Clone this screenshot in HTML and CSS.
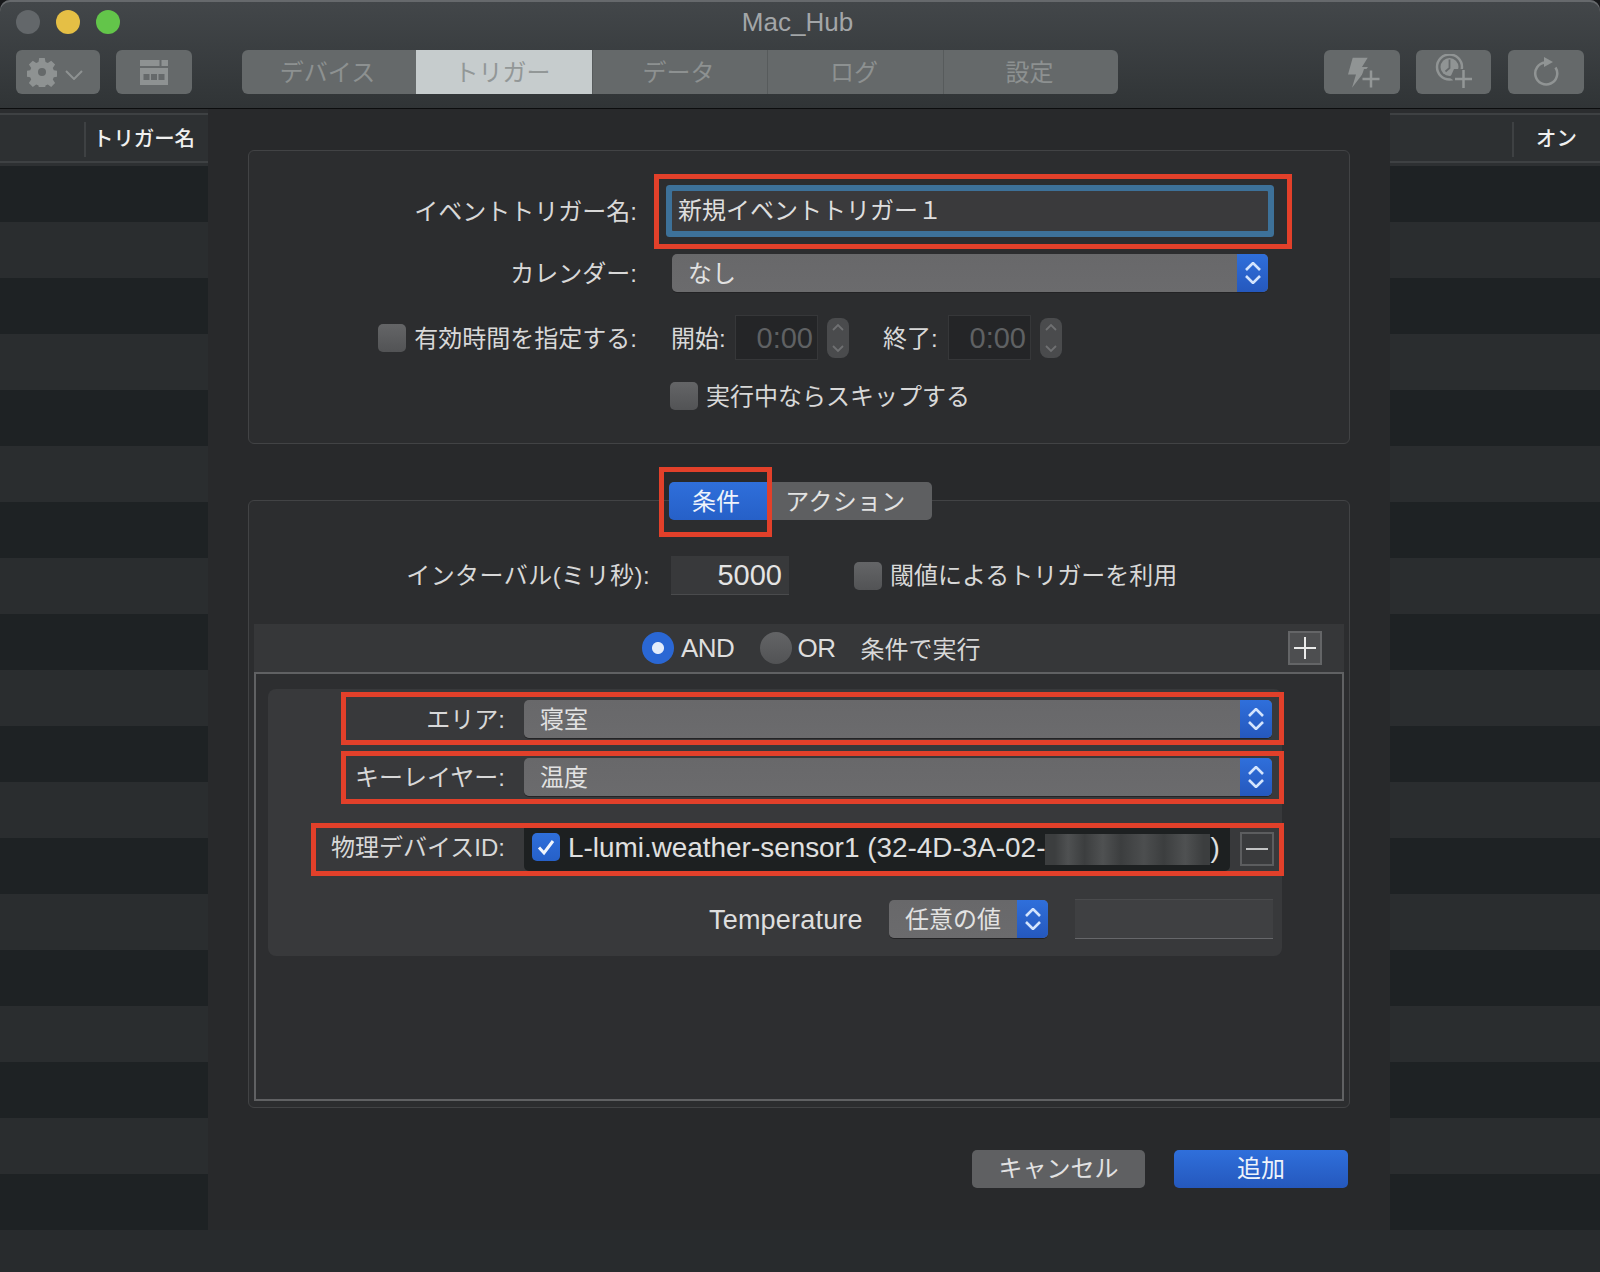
FILE: index.html
```html
<!DOCTYPE html>
<html lang="ja">
<head>
<meta charset="utf-8">
<title>Mac_Hub</title>
<link rel="stylesheet" href="styles.css">
</head>
<body>
<div class="window">
  <header class="titlebar">
    <div class="title-row">
      <div class="lights"><span class="light light-close"></span><span class="light light-min"></span><span class="light light-max"></span></div>
      <div class="app-title">Mac_Hub</div>
      <div></div>
    </div>
    <div class="toolbar">
      <div class="tool tool-gear">
        <svg class="ico-gear" width="30" height="30" viewBox="0 0 30 30"><path fill-rule="evenodd" d="M12.200 1h5.600l.7 4 2.300 1 3.400-2.300 3.900 3.900-2.300 3.400 1 2.300 4 .7v5.600l-4 .7-1 2.300 2.300 3.400-3.900 3.900-3.400-2.300-2.300 1-.7 4h-5.600l-.7-4-2.300-1-3.400 2.300-3.900-3.900 2.300-3.400-1-2.300-4-.7v-5.600l4-.7 1-2.300-2.300-3.400 3.900-3.900 3.400 2.300 2.300-1zM15 11a4 4 0 1 0 0 8 4 4 0 0 0 0-8z"/></svg>
        <svg class="ico-down" width="18" height="10" viewBox="0 0 18 10"><path d="M1 1l8 8 8-8"/></svg>
      </div>
      <div class="tool tool-table">
        <svg width="28" height="25" viewBox="0 0 28 25"><path fill-rule="evenodd" d="M0 0h19.500v6H0zM21.500 0H28v6h-6.500zM0 8h28v17H0zM3.500 14v6h6v-6zM11 14v6h6v-6zM18.500 14v6h6v-6z"/></svg>
      </div>
      <nav class="segments">
        <div class="seg seg-a">デバイス</div>
        <div class="seg seg-b seg-on">トリガー</div>
        <div class="seg seg-c">データ</div>
        <div class="seg seg-b">ログ</div>
        <div class="seg seg-c">設定</div>
      </nav>
      <div class="tool-group">
        <div class="tool tool-act">
          <svg width="50" height="36" viewBox="0 0 50 36"><path class="solid" d="M15.700 3.700H30.700L25 13H31L15 33.700L19 20.500H11Z"/><path class="cut" d="M27 15h15v18H21z"/><path class="line" d="M34 16.500v17M25.500 25h17"/></svg>
        </div>
        <div class="tool tool-clock">
          <svg width="44" height="36" viewBox="0 0 44 36"><circle class="ring" cx="17.500" cy="13" r="12.500"/><circle class="solid" cx="17.500" cy="13" r="9"/><path class="hand" d="M17.500 5.500v8.500l-4 3.500"/><path class="cut" d="M22 15h14v14H21v-3l-3-2z"/><path class="line" d="M31.500 16v18M23 25h17"/></svg>
        </div>
        <div class="tool tool-refresh">
          <svg width="26" height="32" viewBox="0 0 26 32"><path class="ring" d="M12 6.500A11 11 0 1 0 22.500 11.500"/><path class="solid" d="M11 1l9 5-9 5z"/></svg>
        </div>
      </div>
    </div>
  </header>

  <div class="content">
    <aside class="list">
      <div class="list-head">
        <span class="head-spacer-left"></span><span class="head-rule"></span><span class="head-text head-text-left">トリガー名</span>
      </div>
      <div class="rows"></div>
    </aside>

    <main class="sheet">
      <section class="group group-top">
        <div class="row row-name">
          <div class="label label-top">イベントトリガー名:</div>
          <div class="focus-field">新規イベントトリガー１</div>
          <div class="mark mark-name"></div>
        </div>
        <div class="row row-cal">
          <div class="label label-top">カレンダー:</div>
          <div class="popup popup-cal"><span>なし</span><span class="popup-arrows"><svg width="16" height="22" viewBox="0 0 16 22"><path d="M1 8l7-7 7 7M1 14l7 7 7-7"/></svg></span></div>
        </div>
        <div class="row row-time">
          <div class="label label-top label-check"><span class="check"></span><span class="check-text">有効時間を指定する:</span></div>
          <span class="time-label time-start">開始:</span>
          <div class="time-field">0:00</div>
          <div class="stepper"><svg width="12" height="30" viewBox="0 0 12 30"><path d="M1 7l5-5 5 5M1 23l5 5 5-5"/></svg></div>
          <span class="time-label time-end">終了:</span>
          <div class="time-field">0:00</div>
          <div class="stepper"><svg width="12" height="30" viewBox="0 0 12 30"><path d="M1 7l5-5 5 5M1 23l5 5 5-5"/></svg></div>
        </div>
        <div class="row row-skip"><span class="check"></span><span class="option-text">実行中ならスキップする</span></div>
      </section>

      <div class="tabs">
        <div class="tab tab-on">条件</div>
        <div class="tab tab-off">アクション</div>
        <div class="mark mark-tab"></div>
      </div>

      <section class="group group-cond">
        <div class="row row-interval">
          <div class="label label-interval">インターバル(ミリ秒):</div>
          <div class="num-field">5000</div>
          <span class="check check-threshold"></span><span class="option-text">閾値によるトリガーを利用</span>
        </div>
        <div class="panel">
          <div class="panel-bar">
            <span class="radio radio-on"></span><span class="radio-text">AND</span>
            <span class="radio radio-off"></span><span class="radio-text">OR</span>
            <span class="panel-note">条件で実行</span>
            <span class="square-btn square-plus"><svg width="24" height="24" viewBox="0 0 24 24"><path d="M12 1v22M1 12h22"/></svg></span>
          </div>
          <div class="panel-body">
            <div class="card">
              <div class="card-row card-row-area">
                <div class="label label-card">エリア:</div>
                <div class="popup popup-wide"><span>寝室</span><span class="popup-arrows popup-arrows-wide"><svg width="16" height="22" viewBox="0 0 16 22"><path d="M1 8l7-7 7 7M1 14l7 7 7-7"/></svg></span></div>
                <div class="mark mark-area"></div>
              </div>
              <div class="card-row card-row-key">
                <div class="label label-card">キーレイヤー:</div>
                <div class="popup popup-wide"><span>温度</span><span class="popup-arrows popup-arrows-wide"><svg width="16" height="22" viewBox="0 0 16 22"><path d="M1 8l7-7 7 7M1 14l7 7 7-7"/></svg></span></div>
                <div class="mark mark-key"></div>
              </div>
              <div class="card-row card-row-device">
                <div class="label label-card">物理デバイスID:</div>
                <div class="device">
                  <span class="check check-on"><svg width="20" height="18" viewBox="0 0 20 18"><path d="M3 9.500l5 5.500L17 3"/></svg></span>
                  <span class="device-text device-name">L-lumi.weather-sensor1 (32-4D-3A-02-</span><span class="redacted"></span><span class="device-text">)</span>
                </div>
                <span class="square-btn square-minus"><svg width="24" height="4" viewBox="0 0 24 4"><path d="M1 2h22"/></svg></span>
                <div class="mark mark-device"></div>
              </div>
              <div class="card-row card-row-temp">
                <span class="temp-label">Temperature</span>
                <div class="popup popup-small"><span>任意の値</span><span class="popup-arrows"><svg width="16" height="22" viewBox="0 0 16 22"><path d="M1 8l7-7 7 7M1 14l7 7 7-7"/></svg></span></div>
                <div class="temp-field"></div>
              </div>
            </div>
          </div>
        </div>
      </section>

      <footer class="actions">
        <div class="btn btn-cancel">キャンセル</div>
        <div class="btn btn-add">追加</div>
      </footer>
    </main>

    <aside class="list list-right">
      <div class="list-head">
        <span class="head-spacer-right"></span><span class="head-rule"></span><span class="head-text head-text-right">オン</span>
      </div>
      <div class="rows"></div>
    </aside>
  </div>
  <div class="statusbar"></div>
</div>
</body>
</html>
```

FILE: styles.css
```css
* { box-sizing: border-box; }
html, body { margin: 0; padding: 0; }
body {
  width: 1600px;
  height: 1272px;
  overflow: hidden;
  background: #17181a;
  color: #d8d8d8;
  font-family: "Liberation Sans", "Noto Sans CJK JP", sans-serif;
  font-size: 24px;
}
.window { display: flex; flex-direction: column; height: 1272px; }

/* title bar */
.titlebar {
  height: 109px;
  flex: none;
  border-bottom: 1px solid #0c0d0e;
  background: linear-gradient(#43474a, #303436);
  box-shadow: inset 0 2px 0 #66696c;
  border-radius: 10px 10px 0 0;
}
.title-row {
  height: 44px;
  padding: 0 16px;
  display: grid;
  grid-template-columns: 1fr auto 1fr;
  align-items: center;
}
.lights { display: flex; gap: 16px; }
.light { width: 24px; height: 24px; border-radius: 50%; }
.light-close { background: #63676a; }
.light-min { background: #e5bf45; }
.light-max { background: #63c54a; }
.app-title { color: #a3a6a8; font-size: 26px; padding-right: 5px; }
.toolbar { margin-top: 6px; height: 44px; padding: 0 16px; display: flex; }
.tool {
  height: 44px;
  width: 76px;
  background: #65696a;
  border-radius: 6px;
  display: flex;
  align-items: center;
  justify-content: center;
}
.tool svg { display: block; fill: #8e9292; }
.tool .solid { fill: #909494; }
.tool .line { fill: none; stroke: #939797; stroke-width: 2.500; }
.tool .ring { fill: none; stroke: #909494; stroke-width: 2.500; }
.tool .hand { fill: none; stroke: #65696a; stroke-width: 1.800; }
.tool .cut { fill: #65696a; }
.tool-gear { width: 84px; justify-content: flex-start; padding-left: 11px; }
.tool-gear .ico-down { fill: none; stroke: #8e9292; stroke-width: 2; margin: 6px 0 0 8px; }
.tool-table { margin-left: 16px; }
.segments {
  margin-left: 50px;
  display: flex;
  border-radius: 6px;
  overflow: hidden;
  background: #65696a;
}
.seg {
  height: 44px;
  display: flex;
  align-items: center;
  justify-content: center;
  color: #8d9191;
  font-size: 24px;
  padding: 0 3px 4px 0;
  border-left: 1px solid #575b5c;
}
.seg-a { width: 174px; border-left: 0; }
.seg-b { width: 176px; }
.seg-c { width: 175px; }
.seg-on { background: #c6cccd; color: #929797; border-left: 0; }
.tool-group { margin-left: auto; display: flex; gap: 16px; }
.tool-clock { width: 75px; }
.tool-refresh { margin-left: 1px; }

/* main content */
.content { flex: 1; display: flex; min-height: 0; }
.list { width: 208px; flex: none; display: flex; flex-direction: column; }
.list-right { width: 210px; }
.list-head {
  height: 57px;
  flex: none;
  padding-top: 4px;
  display: flex;
  align-items: center;
  background: linear-gradient(#2b2d2f 0 4px, #3e4143 4px 6px, #2d3032 6px 52px, #3e4143 52px 54px, #2d3032 54px);
}
.head-spacer-left { width: 84px; flex: none; }
.head-spacer-right { width: 122px; flex: none; }
.head-rule { width: 2px; height: 35px; background: #3e4143; flex: none; }
.head-text { color: #f0f0f0; font-size: 20.400px; font-weight: 500; margin-top: -6px; white-space: nowrap; }
.head-text-left { margin-left: 7px; }
.head-text-right { margin-left: 22px; }
.rows {
  flex: 1;
  background: repeating-linear-gradient(#1e2224 0 56px, #2a2d2f 56px 112px);
}
.statusbar { height: 42px; flex: none; background: #282b2d; }

.sheet {
  width: 1182px;
  flex: none;
  padding: 41px 40px 0 40px;
  background: #28292b;
}
.group {
  background: #2c2d2f;
  border: 1px solid #424345;
  border-radius: 6px;
}
.group-top { height: 294px; padding-top: 40px; }
.row { display: flex; align-items: center; position: relative; }
.label { flex: none; text-align: right; white-space: nowrap; color: #d8d8d8; padding-bottom: 4px; }
.label-top { width: 388px; }
.row-name { height: 40px; }
.focus-field {
  margin-left: 35px;
  width: 596px;
  height: 40px;
  line-height: 40px;
  padding-left: 6px;
  background: #3a3a3c;
  color: #dedede;
  box-shadow: 0 0 0 6px #3d7199;
  border-radius: 1px;
}
.mark {
  position: absolute;
  border: 5px solid #e2402a;
  pointer-events: none;
  z-index: 3;
}
.mark-name { left: 405px; top: -17px; width: 638px; height: 75px; }
.row-cal { margin-top: 23px; height: 38px; }
.popup {
  height: 38px;
  border-radius: 5px;
  background: linear-gradient(#68686a, #6b6b6d);
  box-shadow: 0 1px 0 #232325;
  display: flex;
  align-items: center;
  justify-content: space-between;
  padding-left: 16px;
  color: #e2e2e2;
  overflow: hidden;
  flex: none;
}
.popup > span:first-child { padding-bottom: 4px; }
.popup-cal { margin-left: 35px; width: 596px; }
.popup-arrows {
  width: 31px;
  height: 38px;
  flex: none;
  background: linear-gradient(#2f6fdb, #2558bd);
  display: flex;
  align-items: center;
  justify-content: center;
}
.popup-arrows-wide { width: 32px; }
.popup-arrows svg { fill: none; stroke: #d3e4fd; stroke-width: 2.600; }
.row-time { margin-top: 23px; height: 45px; }
.label-check { display: flex; justify-content: flex-end; align-items: center; gap: 8px; padding-bottom: 0; }
.check-text { padding-bottom: 2px; }
.check {
  flex: none;
  width: 28px;
  height: 28px;
  border-radius: 5px;
  background: linear-gradient(#646567, #525355);
  display: inline-flex;
  align-items: center;
  justify-content: center;
}
.option-text { padding-bottom: 4px; }
.time-label { flex: none; white-space: nowrap; padding-bottom: 2px; }
.time-start { margin-left: 34px; width: 55px; }
.time-end { margin-left: 34px; width: 56px; }
.time-field {
  margin-left: 9px;
  width: 83px;
  height: 45px;
  background: #242527;
  border: 1px solid #363739;
  color: #5f6163;
  font-size: 29px;
  line-height: 45px;
  text-align: right;
  padding-right: 4px;
}
.stepper {
  margin-left: 9px;
  width: 22px;
  height: 40px;
  border-radius: 8px;
  background: #4a4b4d;
  display: flex;
  align-items: center;
  justify-content: center;
}
.stepper svg { fill: none; stroke: #6f7072; stroke-width: 1.800; }
.row-skip { margin: 22px 0 0 421px; height: 28px; gap: 8px; }

/* tabs */
.tabs {
  position: relative;
  z-index: 2;
  display: flex;
  margin: 38px 0 -20px 421px;
  width: 263px;
  height: 38px;
}
.tab {
  height: 38px;
  display: flex;
  align-items: center;
  justify-content: center;
  flex: none;
}
.tab-on {
  width: 100px;
  background: linear-gradient(#2f6fdb, #2660c8);
  color: #eef3fb;
  border-radius: 5px 0 0 5px;
  padding: 0 6px 4px 0;
}
.tab-off {
  width: 163px;
  background: #5e5f61;
  border-radius: 0 5px 5px 0;
  color: #e2e2e2;
  padding: 0 10px 4px 0;
  letter-spacing: .3px;
}
.mark-tab { left: -10px; top: -15px; width: 113px; height: 70px; }

/* condition group */
.group-cond { height: 608px; padding-top: 55px; }
.row-interval { height: 39px; }
.label-interval { width: 401px; letter-spacing: .45px; }
.num-field {
  margin-left: 21px;
  width: 118px;
  height: 39px;
  background: #38393b;
  border-bottom: 1px solid #4a4b4d;
  color: #e4e4e4;
  font-size: 29px;
  line-height: 38px;
  text-align: right;
  padding-right: 7px;
}
.check-threshold { margin: 0 8px 0 65px; }
.panel { margin: 29px 5px 0 5px; height: 477px; display: flex; flex-direction: column; }
.panel-bar {
  height: 48px;
  flex: none;
  background: #363739;
  display: flex;
  align-items: center;
  padding-left: 388px;
}
.radio { width: 32px; height: 32px; border-radius: 50%; flex: none; }
.radio-on { background: radial-gradient(circle, #e3ecfb 0 5.500px, #2a67d4 6.500px); }
.radio-off { background: linear-gradient(#636466, #525355); margin-left: 26px; }
.radio-text { margin-left: 7px; font-size: 26px; color: #dedede; letter-spacing: -.5px; }
.radio-off + .radio-text { margin-left: 5px; }
.panel-note { margin-left: 25px; padding-bottom: 2px; }
.square-btn {
  flex: none;
  width: 34px;
  height: 34px;
  background: #4d4e50;
  border: 2px solid #646567;
  display: flex;
  align-items: center;
  justify-content: center;
}
.square-btn svg { fill: none; stroke: #eaeaea; stroke-width: 2; }
.square-plus { margin-left: auto; margin-right: 22px; }
.panel-body {
  flex: 1;
  border: 2px solid #606163;
  background: #2d2e30;
  padding: 15px 12px 0;
}
.card {
  width: 1014px;
  height: 267px;
  background: #38393b;
  border-radius: 8px;
  padding-top: 11px;
}
.card-row { display: flex; align-items: center; position: relative; }
.label-card { width: 237px; }
.card-row-area { height: 38px; }
.card-row-key { height: 38px; margin-top: 20px; }
.card-row-device { height: 48px; margin-top: 27px; }
.card-row-temp { height: 40px; margin-top: 28px; }
.popup-wide { margin-left: 19px; width: 748px; }
.mark-area { left: 73px; top: -8px; width: 943px; height: 53px; }
.mark-key { left: 73px; top: -7px; width: 943px; height: 53px; }
.mark-device { left: 43px; top: 0; width: 973px; height: 53px; }
.device {
  margin-left: 19px;
  width: 706px;
  height: 48px;
  background: #1d2021;
  border-radius: 0 0 5px 5px;
  display: flex;
  align-items: center;
  padding-left: 8px;
  white-space: nowrap;
  flex: none;
}
.check-on { background: linear-gradient(#2f6fdb, #2660c8); }
.check-on svg { fill: none; stroke: #f2f6fd; stroke-width: 3; }
.device-text { color: #e0e0e0; font-size: 27.900px; padding-top: 2px; }
.device-name { margin-left: 8px; }
.redacted {
  flex: none;
  width: 165px;
  height: 31px;
  margin-top: 4px;
  background: linear-gradient(90deg, #3c3e3f 6%, #4f5152 14%, #3c3e3f 24%, #4f5152 35%, #3c3e3f 46%, #4c4e4f 60%, #3c3e3f 72%, #4f5152 85%, #3c3e3f 96%);
}
.square-minus { margin-left: 10px; margin-top: 3px; background: #3a3b3d; border-color: #5c5d5f; }
.square-minus svg { stroke: #c2c3c4; }
.temp-label {
  margin-left: 441px;
  width: 153px;
  flex: none;
  white-space: nowrap;
  font-size: 27px;
  letter-spacing: .2px;
  color: #dedede;
  padding-top: 2px;
}
.popup-small { margin-left: 27px; width: 159px; }
.temp-field {
  margin-left: 27px;
  width: 198px;
  height: 40px;
  background: #3f4042;
  border-top: 1px solid #4a4b4d;
  border-bottom: 1px solid #66676a;
}

/* footer */
.actions { display: flex; justify-content: flex-end; gap: 29px; margin: 42px 2px 0 0; }
.btn {
  width: 174px;
  height: 38px;
  border-radius: 5px;
  display: flex;
  align-items: center;
  justify-content: center;
  padding-bottom: 5px;
}
.btn-cancel { width: 173px; background: #5f6062; color: #e2e2e2; }
.btn-add { background: linear-gradient(#2f6fdb, #2558bd); color: #eef3fb; }
```
